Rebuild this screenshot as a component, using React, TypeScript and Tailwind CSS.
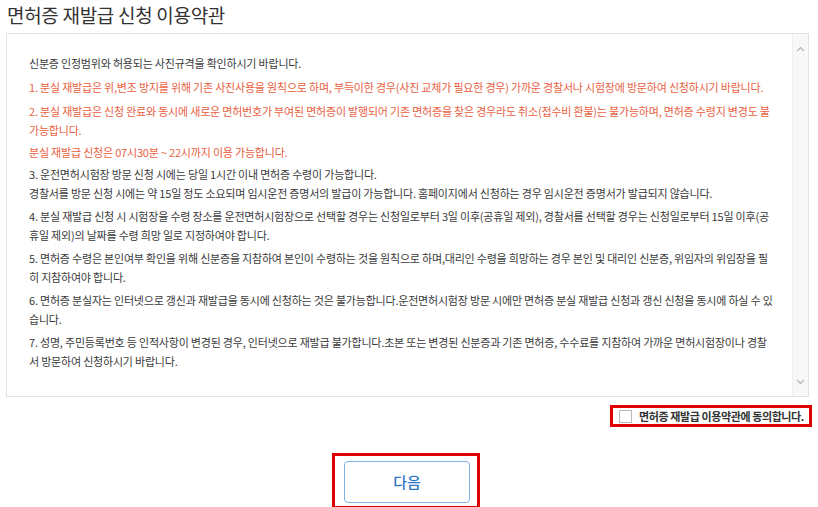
import React, { useState } from 'react';

const font = { fontFamily: '"Noto Sans CJK KR", "Noto Sans", sans-serif' };

type Line = { text: string; red?: boolean; gap: string };

const terms: Line[] = [
  { text: '신분증 인정범위와 허용되는 사진규격을 확인하시기 바랍니다.', gap: '' },
  { text: '1. 분실 재발급은 위,변조 방지를 위해 기존 사진사용을 원칙으로 하며, 부득이한 경우(사진 교체가 필요한 경우) 가까운 경찰서나 시험장에 방문하여 신청하시기 바랍니다.', red: true, gap: 'mt-[5px]' },
  { text: '2. 분실 재발급은 신청 완료와 동시에 새로운 면허번호가 부여된 면허증이 발행되어 기존 면허증을 찾은 경우라도 취소(접수비 환불)는 불가능하며, 면허증 수령지 변경도 불가능합니다.', red: true, gap: 'mt-[5px]' },
  { text: '분실 재발급 신청은 07시30분 ~ 22시까지 이용 가능합니다.', red: true, gap: 'mt-[3px]' },
  { text: '3. 운전면허시험장 방문 신청 시에는 당일 1시간 이내 면허증 수령이 가능합니다.', gap: 'mt-[3px]' },
  { text: '경찰서를 방문 신청 시에는 약 15일 정도 소요되며 임시운전 증명서의 발급이 가능합니다. 홈페이지에서 신청하는 경우 임시운전 증명서가 발급되지 않습니다.', gap: '' },
  { text: '4. 분실 재발급 신청 시 시험장을 수령 장소를 운전면허시험장으로 선택할 경우는 신청일로부터 3일 이후(공휴일 제외), 경찰서를 선택할 경우는 신청일로부터 15일 이후(공휴일 제외)의 날짜를 수령 희망 일로 지정하여야 합니다.', gap: 'mt-[4px]' },
  { text: '5. 면허증 수령은 본인여부 확인을 위해 신분증을 지참하여 본인이 수령하는 것을 원칙으로 하며,대리인 수령을 희망하는 경우 본인 및 대리인 신분증, 위임자의 위임장을 필히 지참하여야 합니다.', gap: 'mt-[4px]' },
  { text: '6. 면허증 분실자는 인터넷으로 갱신과 재발급을 동시에 신청하는 것은 불가능합니다.운전면허시험장 방문 시에만 면허증 분실 재발급 신청과 갱신 신청을 동시에 하실 수 있습니다.', gap: 'mt-[4px]' },
  { text: '7. 성명, 주민등록번호 등 인적사항이 변경된 경우, 인터넷으로 재발급 불가합니다.초본 또는 변경된 신분증과 기존 면허증, 수수료를 지참하여 가까운 면허시험장이나 경찰서 방문하여 신청하시기 바랍니다.', gap: 'mt-[4px]' },
];

const Chevron: React.FC<{ down?: boolean }> = ({ down }) => (
  <svg width="9" height="6" viewBox="0 0 9 6" className="text-[#b5b5b5]">
    <path d={down ? 'M1 1l3.5 3.5L8 1' : 'M1 5l3.5-3.5L8 5'} fill="none" stroke="currentColor" strokeWidth="1.2" />
  </svg>
);

const App: React.FC = () => {
  const [agree, setAgree] = useState(false);

  return (
    <div className="w-[818px] h-[507px] overflow-hidden bg-white" style={font}>
      <h1 className="pl-[7px] pt-[3px] h-[33px] text-[19px] leading-[24px] font-normal text-[#333] tracking-[-0.3px]">
        면허증 재발급 신청 이용약관
      </h1>

      {/* terms box */}
      <div className="ml-[6px] w-[803px] h-[364px] border border-[#e2e2e2] flex">
        <div className="flex-1 pl-[22px] pr-[18px] pt-[20px] text-[11px] leading-[19px] tracking-[-0.2px]">
          {terms.map((l, i) => (
            <p key={i} className={`${l.gap} ${l.red ? 'text-[#e8613f]' : 'text-[#3a3a3a]'}`}>
              {l.text}
            </p>
          ))}
        </div>
        <div className="w-[16px] bg-[#f8f8f8] border-l border-[#efefef] flex flex-col items-center justify-between pt-[12px] pb-[11px]">
          <Chevron />
          <Chevron down />
        </div>
      </div>

      {/* agree */}
      <div className="flex justify-end pr-[6px] mt-[8px]">
        <label className="w-[202px] h-[22px] border-[3px] border-[#e00000] flex items-center pl-[6px] gap-[7px] cursor-pointer">
          <input
            type="checkbox"
            checked={agree}
            onChange={(e) => setAgree(e.target.checked)}
            className="appearance-none w-[13px] h-[13px] border border-[#b9b9b9] bg-white m-0"
          />
          <span className="text-[11px] font-bold text-[#333] tracking-[-0.4px] whitespace-nowrap">면허증 재발급 이용약관에 동의합니다.</span>
        </label>
      </div>

      {/* next */}
      <div className="flex justify-center mt-[26px] pr-[6px] border-b border-[#dcdcdc]">
        <div className="w-[148px] h-[56px] border-[3px] border-[#e00000] pl-[9px] pt-[5px]">
          <button className="w-[126px] h-[42px] rounded-[4px] border border-[#7fb2e5] bg-white text-[15px] text-[#2f77c5] font-medium">
            다음
          </button>
        </div>
      </div>
    </div>
  );
};

export default App;
